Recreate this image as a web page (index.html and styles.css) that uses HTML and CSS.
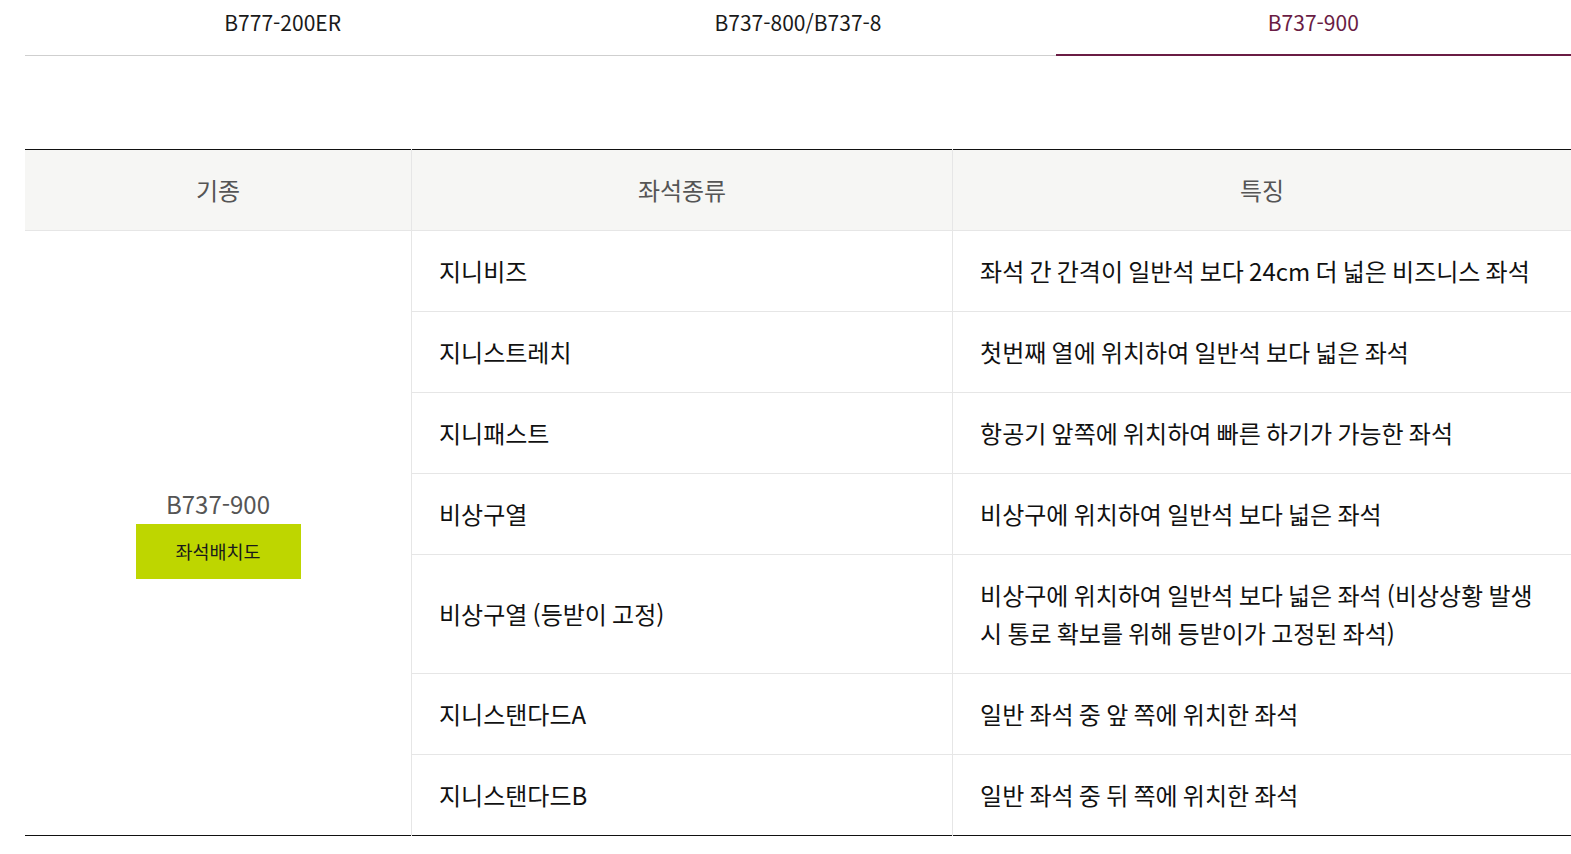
FILE: index.html
```html
<!DOCTYPE html>
<html lang="ko">
<head>
  <meta charset="UTF-8" />
  <meta name="viewport" content="width=device-width, initial-scale=1.0" />
  <title>좌석 안내</title>
  <link rel="stylesheet" href="styles.css">
</head>
<body>
  <div class="wrap">
    <ul class="tabs">
      <li class="tab">B777-200ER</li>
      <li class="tab">B737-800/B737-8</li>
      <li class="tab active">B737-900</li>
    </ul>

    <table class="seat-table">
      <colgroup>
        <col class="col-type" />
        <col class="col-seat" />
        <col class="col-desc" />
      </colgroup>
      <thead>
        <tr>
          <th>기종</th>
          <th>좌석종류</th>
          <th>특징</th>
        </tr>
      </thead>
      <tbody>
        <tr>
          <td class="model" rowspan="7">
            <p class="model-name">B737-900</p>
            <button class="map-btn">좌석배치도</button>
          </td>
          <td>지니비즈</td>
          <td>좌석 간 간격이 일반석 보다 24cm 더 넓은 비즈니스 좌석</td>
        </tr>
        <tr>
          <td>지니스트레치</td>
          <td>첫번째 열에 위치하여 일반석 보다 넓은 좌석</td>
        </tr>
        <tr>
          <td>지니패스트</td>
          <td>항공기 앞쪽에 위치하여 빠른 하기가 가능한 좌석</td>
        </tr>
        <tr>
          <td>비상구열</td>
          <td>비상구에 위치하여 일반석 보다 넓은 좌석</td>
        </tr>
        <tr>
          <td>비상구열 (등받이 고정)</td>
          <td>비상구에 위치하여 일반석 보다 넓은 좌석 (비상상황 발생 시 통로 확보를 위해 등받이가 고정된 좌석)</td>
        </tr>
        <tr>
          <td>지니스탠다드A</td>
          <td>일반 좌석 중 앞 쪽에 위치한 좌석</td>
        </tr>
        <tr>
          <td>지니스탠다드B</td>
          <td>일반 좌석 중 뒤 쪽에 위치한 좌석</td>
        </tr>
      </tbody>
    </table>
  </div>
</body>
</html>
```

FILE: styles.css
```css
body {
  font-family: "Noto Sans CJK KR", "Noto Sans", sans-serif;
  background-color: #fff;
  color: #111;
  margin: 0;
  padding: 0;
  word-break: keep-all;
}

.wrap {
  margin-left: 25px;
}

.tabs {
  display: flex;
  list-style: none;
  margin: 0;
  padding: 0;
  border-bottom: 1px solid #cfcfcf;
}

.tab {
  flex: 1;
  text-align: center;
  font-size: 21px;
  line-height: 45px;
  height: 54px;
  margin-bottom: -1px;
  border-bottom: 2px solid transparent;
  color: #1a1a1a;
  cursor: pointer;
}

.tab.active {
  color: #6a1c44;
  border-bottom-color: #6a1c44;
}

.seat-table {
  width: 100%;
  margin-top: 93px;
  border-collapse: collapse;
  table-layout: fixed;
  border-top: 1px solid #111;
  border-bottom: 1px solid #111;
}

.col-type { width: 25%; }
.col-seat { width: 35%; }
.col-desc { width: 40%; }

.seat-table th {
  background: #f6f6f4;
  color: #555;
  font-weight: normal;
  font-size: 24px;
  line-height: 38px;
  padding: 21px 10px;
  border-left: 1px solid #e6e6e6;
  border-bottom: 1px solid #e6e6e6;
}

.seat-table th:first-child {
  border-left: none;
}

.seat-table td {
  font-size: 24px;
  line-height: 37.5px;
  word-spacing: -1.5px;
  padding: 21px 28px 21.5px 27px;
  border-left: 1px solid #e6e6e6;
  border-bottom: 1px solid #e6e6e6;
  vertical-align: middle;
}

.seat-table tbody tr:last-child td {
  border-bottom: none;
}

.seat-table td.model {
  border-left: none;
  border-bottom: none;
  text-align: center;
  padding: 0;
}

.model-name {
  margin: 0 0 3px;
  font-size: 24px;
  line-height: 1.4;
  color: #555;
}

.map-btn {
  width: 165px;
  height: 55px;
  border: none;
  background: #bed600;
  color: #1a1a1a;
  font-family: inherit;
  font-size: 18.5px;
  cursor: pointer;
}
```
